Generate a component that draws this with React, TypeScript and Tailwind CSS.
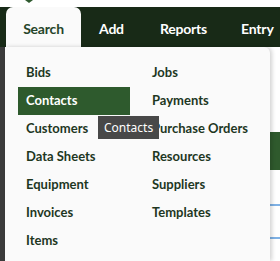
import React from 'react';

const left = ['Bids', 'Contacts', 'Customers', 'Data Sheets', 'Equipment', 'Invoices', 'Items'];
const right = ['Jobs', 'Payments', 'Purchase Orders', 'Resources', 'Suppliers', 'Templates'];

export default function App() {
  return (
    <div className="relative w-[280px] h-[261px] overflow-hidden bg-white font-['Lato',sans-serif]">
      {/* top strip with small marker */}
      <div className="h-[7px] relative">
        <div className="absolute left-[25px] top-0 w-0 h-0 border-l-[4px] border-r-[4px] border-t-[3px] border-l-transparent border-r-transparent border-t-[#2f5a2f]" />
      </div>

      {/* nav bar */}
      <div className="h-[40px] bg-[#182a17] flex items-stretch pl-[6px] text-[14px] font-bold tracking-[-0.2px]">
        <div className="w-[75px] bg-[#fafafa] rounded-t-[7px] flex items-center justify-center pt-[2px] text-[#26452a]">Search</div>
        <div className="ml-[18px] flex items-center pt-[2px] text-white">Add</div>
        <div className="ml-[36px] flex items-center pt-[2px] text-white">Reports</div>
        <div className="ml-[34px] flex items-center pt-[2px] text-white">Entry</div>
      </div>

      {/* below bar */}
      <div className="flex h-[214px]">
        <div className="w-[5px] bg-[#3b3b3b]" />
        <div className="w-[265px] bg-[#fafafa] rounded-tr-[6px] shadow-[2px_0_4px_rgba(0,0,0,0.18)] z-10 pt-[12px] flex text-[13px] font-bold text-[#1e371f]">
          <div className="w-[125px] pl-[13px]">
            {left.map((t) => (
              <div
                key={t}
                className={
                  t === 'Contacts'
                    ? 'h-[28px] w-[112px] flex items-center pl-[8px] bg-[#2e5a2d] text-white'
                    : 'h-[28px] flex items-center pl-[8px]'
                }
              >
                {t}
              </div>
            ))}
          </div>
          <div className="pl-[22px]">
            {right.map((t) => (
              <div key={t} className="h-[28px] flex items-center">
                {t}
              </div>
            ))}
          </div>
        </div>
        <div className="flex-1 flex flex-col">
          <div className="h-[85px] bg-white" />
          <div className="h-[38px] bg-[#2f5a2d]" />
          <div className="h-[36px] bg-white border-b-2 border-[#7fb2e6]" />
          <div className="h-[33px] bg-white border-b-2 border-[#7fb2e6]" />
          <div className="flex-1 bg-white" />
        </div>
      </div>

      {/* tooltip */}
      <div className="absolute left-[98px] top-[116px] z-20 h-[23px] px-[6px] flex items-center bg-[#484848] text-white text-[12px] font-['Noto_Sans',sans-serif]">
        Contacts
      </div>
    </div>
  );
}
